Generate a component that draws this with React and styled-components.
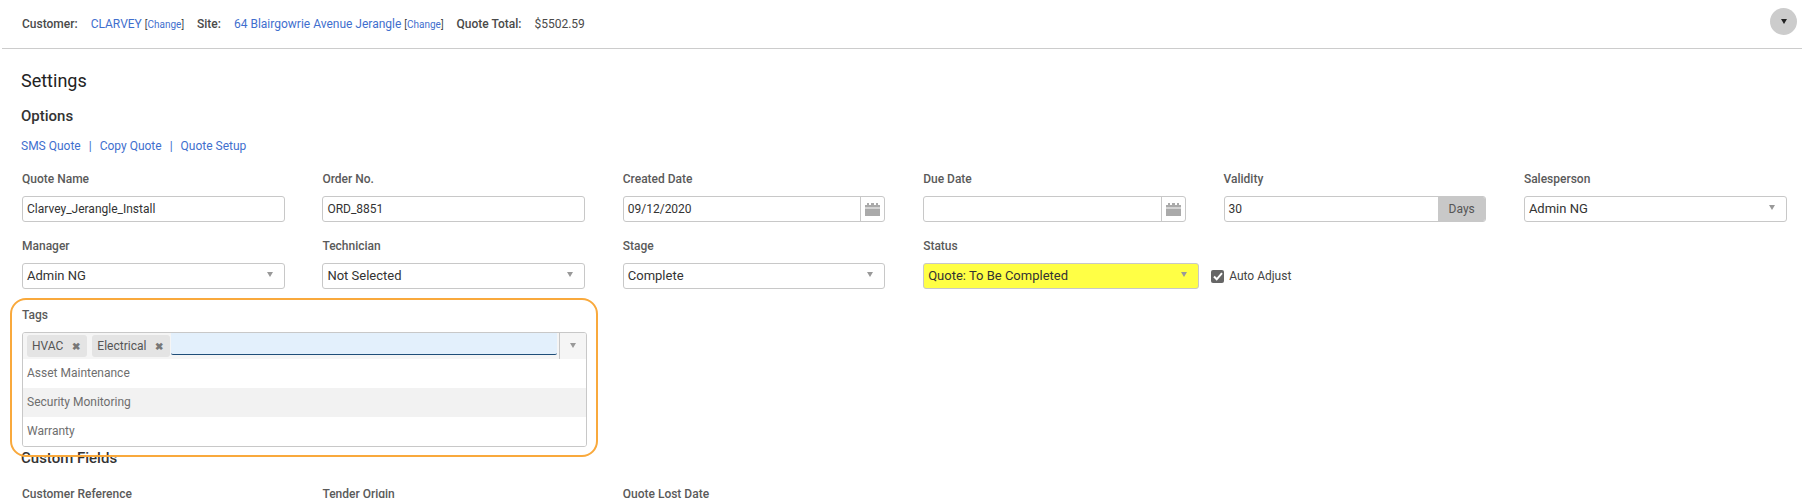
import React from "react";
import styled, { createGlobalStyle } from "styled-components";

const Global = createGlobalStyle`
  html, body { margin: 0; padding: 0; height: 100%; overflow: hidden; background: #fff; }
  body { font-family: Roboto, "Liberation Sans", sans-serif; font-size: 12px; color: #333; }
  * { box-sizing: border-box; }
`;

const Page = styled.div`
  width: 1802px;
  height: 498px;
  overflow: hidden;
`;
const TopBar = styled.header`
  height: 49px;
  margin-left: 2px;
  padding: 0 5px 1px 20px;
  display: flex;
  align-items: center;
  border-bottom: 1px solid #ccc;
`;
const Summary = styled.div`
  display: flex;
  align-items: center;
  gap: 13px;
  flex: 1;
`;
const SummaryItem = styled.div`
  display: flex;
  align-items: baseline;
`;
const SummaryLabel = styled.span`
  font-weight: 500;
  color: #4a4a4a;
  margin-right: 13px;
`;
const SummaryLink = styled.a`
  color: #3f6fce;
`;
const SummaryValue = styled.span`
  color: #4a4a4a;
`;
const ChangeLink = styled.span`
  font-size: 10px;
  color: #444;
  margin-left: 3px;
  a { color: #3f6fce; }
`;
const RoundButton = styled.button`
  width: 27px;
  height: 27px;
  border: 0;
  padding: 0;
  border-radius: 50%;
  background: #ccc;
  display: flex;
  align-items: center;
  justify-content: center;
  margin-top: -5px;
`;
const DarkCaret = styled.span`
  width: 0;
  height: 0;
  border-left: 3.5px solid transparent;
  border-right: 3.5px solid transparent;
  border-top: 5px solid #222;
`;
const Content = styled.main`
  padding: 0 0 0 22px;
`;
const PageTitle = styled.h1`
  margin: 21px 0 0 -1px;
  font-size: 18px;
  line-height: 22px;
  font-weight: 400;
  color: #222;
`;
const SectionTitle = styled.h2`
  margin: 15px 0 0 -1px;
  font-size: 15px;
  line-height: 18px;
  font-weight: 500;
  color: #333;
`;
const LinkRow = styled.nav`
  margin: 13px 0 0 -1px;
  display: flex;
  gap: 8px;
  line-height: 16px;
  color: #3f6fce;
  a { color: #3f6fce; }
`;
const FormGrid = styled.div`
  margin-top: 16px;
  display: grid;
  grid-template-columns: repeat(6, 262.7px);
  column-gap: 37.7px;
  row-gap: 15px;
`;
const Field = styled.div`
  min-width: 0;
  grid-column: ${(p) => p.$span || "auto"};
`;
const Label = styled.label`
  display: block;
  height: 18px;
  line-height: 18px;
  margin-bottom: 8px;
  font-weight: 500;
  color: #5a5a5a;
`;
const Control = styled.div`
  height: 26px;
  border: 1px solid #c8c8c8;
  border-radius: 3px;
  display: flex;
  align-items: center;
  overflow: hidden;
  background: ${(p) => p.$bg || "#fff"};
  padding-left: 4px;
  color: #333;
`;
const SelectControl = styled(Control)`
  font-size: 13px;
  padding-bottom: 2px;
`;
const ControlText = styled.span`
  flex: 1;
`;
const Caret = styled.span`
  width: 0;
  height: 0;
  border-left: 3.5px solid transparent;
  border-right: 3.5px solid transparent;
  border-top: 5.5px solid #999;
  margin-right: ${(p) => p.$mr ?? 11}px;
  margin-top: -1px;
`;
const Addon = styled.span`
  width: 24px;
  height: 100%;
  border-left: 1px solid #c8c8c8;
  display: flex;
  align-items: center;
  justify-content: center;
`;
const UnitAddon = styled.span`
  width: 47px;
  height: 100%;
  background: #c8c8c8;
  color: #555;
  display: flex;
  align-items: center;
  justify-content: center;
`;
const StatusRow = styled.div`
  display: flex;
  align-items: center;
  gap: 12.5px;
`;
const StatusSelect = styled(SelectControl)`
  width: 275.5px;
  flex: none;
`;
const CheckLabel = styled.div`
  display: flex;
  align-items: center;
  gap: 5px;
  color: #444;
`;
const CheckBox = styled.span`
  width: 13px;
  height: 13px;
  border-radius: 2px;
  background: #666;
  display: flex;
  align-items: center;
  justify-content: center;
`;
const TagsSection = styled.section`
  position: relative;
  width: 564.6px;
  margin-top: 17px;
`;
const Ring = styled.div`
  position: absolute;
  top: -8px;
  left: -12px;
  right: -11px;
  bottom: -10px;
  border: 2px solid #f9a93c;
  border-radius: 16px;
  z-index: 2;
  pointer-events: none;
`;
const TagBox = styled.div`
  border: 1px solid #c8c8c8;
  border-radius: 3px;
  overflow: hidden;
`;
const TagHead = styled.div`
  height: 26px;
  background: #f5f5f5;
  display: flex;
  padding-left: 4px;
  gap: 5px;
`;
const Chip = styled.span`
  height: 22px;
  margin-top: 2px;
  padding: 0 7px 0 5px;
  background: #e4e4e4;
  border-radius: 3px;
  display: flex;
  align-items: center;
  gap: 9px;
  color: #555;
`;
const ChipClose = styled.span`
  font-size: 10px;
  font-weight: 700;
  color: #777;
`;
const TagInput = styled.div`
  flex: 1;
  height: 22px;
  margin-left: -4px;
  background: #e3f0fc;
  border-bottom: 1px solid #1f4e79;
  border-radius: 0 0 2px 2px;
`;
const TagArrow = styled.div`
  width: 27px;
  margin-left: -3px;
  border-left: 1px solid #c8c8c8;
  display: flex;
  align-items: center;
  justify-content: center;
`;
const Option = styled.div`
  height: 29px;
  padding: 0 0 2px 4px;
  display: flex;
  align-items: center;
  color: #6e6e6e;
  background: ${(p) => (p.$active ? "#f2f2f2" : "#fff")};
`;
const CustomTitle = styled(SectionTitle)`
  margin-top: 2px;
`;
const CustomGrid = styled(FormGrid)`
  margin-top: 18px;
`;

const Calendar = () => (
  <svg width="15" height="13" viewBox="0 0 15 13" aria-hidden="true">
    <path fill="#aaa" d="M2 0h2v2h2V0h3v2h2V0h2v2h2v2.500H0V2h2zM0 5.500h15V13H0z" />
  </svg>
);

const Check = () => (
  <svg width="10" height="9" viewBox="0 0 10 9" aria-hidden="true">
    <path fill="none" stroke="#fff" strokeWidth="2" d="M1 4.500l2.700 2.800L9 1.200" />
  </svg>
);

const SelectField = ({ label, value }) => (
  <Field>
    <Label>{label}</Label>
    <SelectControl>
      <ControlText>{value}</ControlText>
      <Caret />
    </SelectControl>
  </Field>
);

const TextField = ({ label, value }) => (
  <Field>
    <Label>{label}</Label>
    <Control>
      <ControlText>{value}</ControlText>
    </Control>
  </Field>
);

const DateField = ({ label, value }) => (
  <Field>
    <Label>{label}</Label>
    <Control>
      <ControlText>{value}</ControlText>
      <Addon>
        <Calendar />
      </Addon>
    </Control>
  </Field>
);

export default function App() {
  return (
    <Page>
      <Global />
      <TopBar>
        <Summary>
          <SummaryItem>
            <SummaryLabel>Customer:</SummaryLabel>
            <SummaryLink>CLARVEY</SummaryLink>
            <ChangeLink>[<a>Change</a>]</ChangeLink>
          </SummaryItem>
          <SummaryItem>
            <SummaryLabel>Site:</SummaryLabel>
            <SummaryLink>64 Blairgowrie Avenue Jerangle</SummaryLink>
            <ChangeLink>[<a>Change</a>]</ChangeLink>
          </SummaryItem>
          <SummaryItem>
            <SummaryLabel>Quote Total:</SummaryLabel>
            <SummaryValue>$5502.59</SummaryValue>
          </SummaryItem>
        </Summary>
        <RoundButton aria-label="Expand">
          <DarkCaret />
        </RoundButton>
      </TopBar>
      <Content>
        <PageTitle>Settings</PageTitle>
        <SectionTitle>Options</SectionTitle>
        <LinkRow>
          <a>SMS Quote</a>
          <span>|</span>
          <a>Copy Quote</a>
          <span>|</span>
          <a>Quote Setup</a>
        </LinkRow>
        <FormGrid>
          <TextField label="Quote Name" value="Clarvey_Jerangle_Install" />
          <TextField label="Order No." value="ORD_8851" />
          <DateField label="Created Date" value="09/12/2020" />
          <DateField label="Due Date" value="" />
          <Field>
            <Label>Validity</Label>
            <Control>
              <ControlText>30</ControlText>
              <UnitAddon>Days</UnitAddon>
            </Control>
          </Field>
          <SelectField label="Salesperson" value="Admin NG" />
          <SelectField label="Manager" value="Admin NG" />
          <SelectField label="Technician" value="Not Selected" />
          <SelectField label="Stage" value="Complete" />
          <Field $span="span 2">
            <Label>Status</Label>
            <StatusRow>
              <StatusSelect $bg="#ffff45">
                <ControlText>Quote: To Be Completed</ControlText>
                <Caret />
              </StatusSelect>
              <CheckLabel>
                <CheckBox>
                  <Check />
                </CheckBox>
                Auto Adjust
              </CheckLabel>
            </StatusRow>
          </Field>
        </FormGrid>
        <TagsSection>
          <Ring />
          <Label>Tags</Label>
          <TagBox>
            <TagHead>
              <Chip>HVAC<ChipClose>✖</ChipClose></Chip>
              <Chip>Electrical<ChipClose>✖</ChipClose></Chip>
              <TagInput />
              <TagArrow>
                <Caret $mr={0} />
              </TagArrow>
            </TagHead>
            <Option>Asset Maintenance</Option>
            <Option $active>Security Monitoring</Option>
            <Option>Warranty</Option>
          </TagBox>
        </TagsSection>
        <CustomTitle>Custom Fields</CustomTitle>
        <CustomGrid>
          <Label>Customer Reference</Label>
          <Label>Tender Origin</Label>
          <Label>Quote Lost Date</Label>
        </CustomGrid>
      </Content>
    </Page>
  );
}
